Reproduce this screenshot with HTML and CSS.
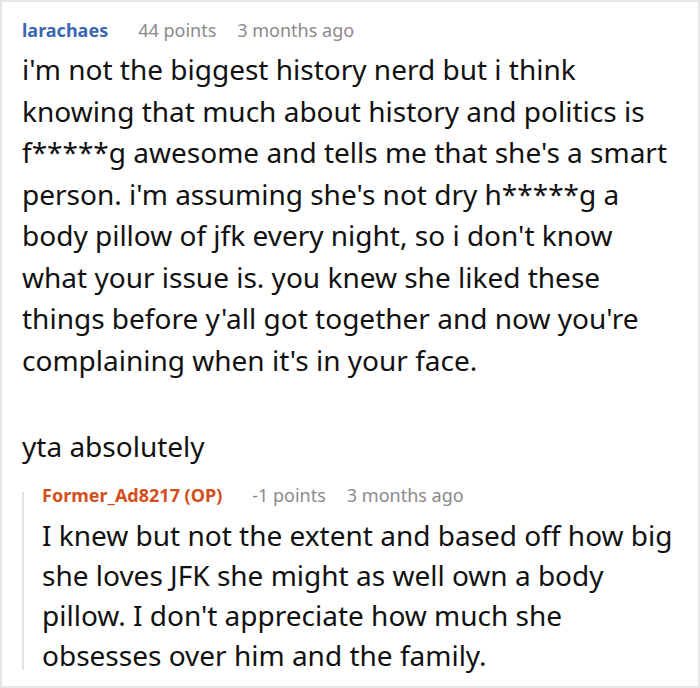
FILE: index.html
```html
<!DOCTYPE html>
<html>
<head>
<meta charset="utf-8">
<link rel="stylesheet" href="styles.css">
</head>
<body>
<div class="comment">
  <div class="meta">
    <span class="author">larachaes</span>
    <span class="info points">44 points</span>
    <span class="info">3 months ago</span>
  </div>
  <p class="para">
    <span class="line">i'm not the biggest history nerd but i think</span>
    <span class="line">knowing that much about history and politics is</span>
    <span class="line">f*****g awesome and tells me that she's a smart</span>
    <span class="line">person. i'm assuming she's not dry h*****g a</span>
    <span class="line">body pillow of jfk every night, so i don't know</span>
    <span class="line">what your issue is. you knew she liked these</span>
    <span class="line">things before y'all got together and now you're</span>
    <span class="line">complaining when it's in your face.</span>
  </p>
  <p class="para last">
    <span class="line">yta absolutely</span>
  </p>
  <div class="reply">
    <div class="meta">
      <span class="author op">Former_Ad8217 (OP)</span>
      <span class="info points">-1 points</span>
      <span class="info">3 months ago</span>
    </div>
    <p class="para reply-body">
      <span class="line">I knew but not the extent and based off how big</span>
      <span class="line">she loves JFK she might as well own a body</span>
      <span class="line">pillow. I don't appreciate how much she</span>
      <span class="line">obsesses over him and the family.</span>
    </p>
  </div>
</div>
</body>
</html>
```
FILE: styles.css
```css
html, body {
  margin: 0;
  padding: 0;
  background: #ffffff;
}
body {
  font-family: "Noto Sans", "Open Sans", sans-serif;
  color: #111111;
}
.comment {
  box-sizing: border-box;
  width: 700px;
  height: 688px;
  border: 2px solid #e6e6e6;
  padding: 16px 20px 0 20px;
  overflow: hidden;
}
.meta {
  display: flex;
  align-items: baseline;
  font-size: 18px;
  line-height: 24px;
  white-space: nowrap;
}
.author {
  font-weight: 700;
  color: #3a66b4;
  margin-right: 30px;
}
.author.op {
  color: #d24f1c;
}
.info {
  color: #8a8a8a;
}
.points {
  margin-right: 21px;
}
.para {
  margin: 7px 0 0 0;
  font-size: 28px;
  line-height: 41.5px;
}
.para.last {
  margin-top: 45px;
}
.line {
  display: block;
  white-space: nowrap;
}
.reply {
  position: relative;
  margin-top: 15px;
  padding-left: 20px;
}
.reply::before {
  content: "";
  position: absolute;
  left: 0;
  top: 9px;
  bottom: 5px;
  width: 2px;
  background: #e2e2e2;
}
.reply-body {
  margin-top: 8px;
  line-height: 40px;
}
```
